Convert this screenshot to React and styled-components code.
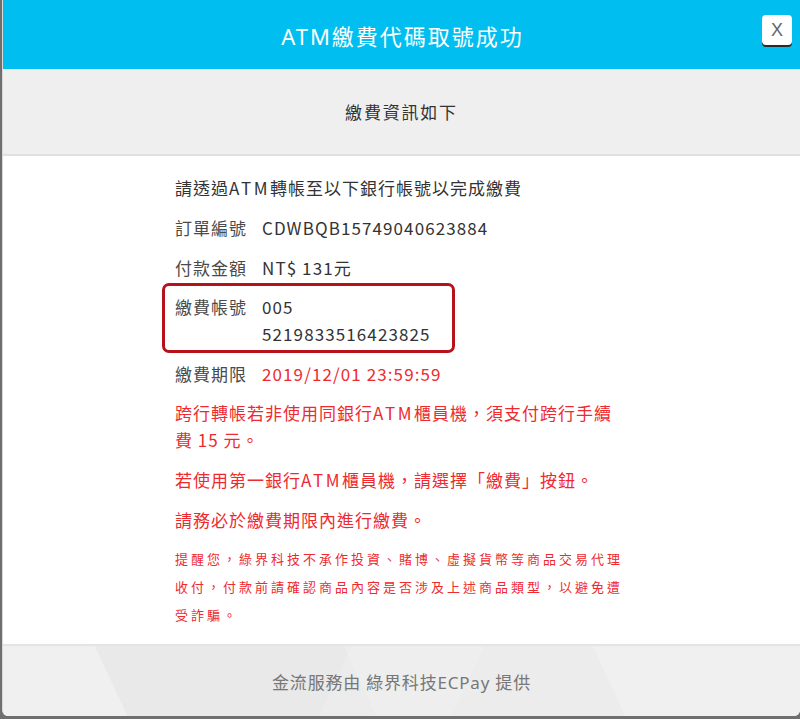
import React from "react";
import styled, { createGlobalStyle } from "styled-components";

const GlobalStyle = createGlobalStyle`
  html, body {
    margin: 0;
    padding: 0;
    background: #6f6f6f;
    overflow: hidden;
  }
  body {
    font-family: "Noto Sans", "Noto Sans CJK TC", sans-serif;
  }
`;

const Modal = styled.div`
  margin-left: 2px;
  width: 798px;
  height: 716px;
  background: #fff;
  border-left: 1px solid #d8d8d8;
  border-radius: 0 0 6px 6px;
  overflow: hidden;
  display: flex;
  flex-direction: column;
  box-sizing: border-box;
`;

const Header = styled.div`
  height: 69px;
  background: #00bff0;
  display: flex;
  align-items: center;
  justify-content: center;
  position: relative;
  flex-shrink: 0;
`;

const Title = styled.h1`
  margin: 0;
  color: #fff;
  font-family: "Noto Sans", "Noto Sans CJK TC", sans-serif;
  font-weight: 400;
  font-size: 22px;
  letter-spacing: 2px;
  padding-left: 2px;
`;

const CloseButton = styled.button`
  position: absolute;
  top: 15px;
  right: 8px;
  width: 30px;
  height: 30px;
  padding: 0;
  border: none;
  border-radius: 4px;
  background: #fff;
  box-shadow: 0 2px 0 #2a2a2a;
  color: #666;
  font-family: "Liberation Sans", "Noto Sans", sans-serif;
  font-size: 18px;
  line-height: 28px;
  cursor: pointer;
`;

const SubHeader = styled.div`
  height: 85px;
  background: #efefef;
  border-bottom: 2px solid #e0e0e0;
  display: flex;
  align-items: center;
  justify-content: center;
  font-size: 17px;
  letter-spacing: 1.8px;
  color: #333;
  flex-shrink: 0;
`;

const Body = styled.div`
  flex: 1;
  padding: 18px 0 0 172px;
  box-sizing: border-box;
`;

const Content = styled.div`
  width: 452px;
  font-family: "Noto Sans CJK TC", sans-serif;
  font-size: 17px;
  letter-spacing: 1px;
  line-height: 27px;
  color: #333;
`;

const Latin = styled.span`
  letter-spacing: 2.6px;
`;

const Para = styled.p`
  margin: ${(p) => p.$mt || 0}px 0 0 0;
  color: ${(p) => (p.$red ? "#ef2a2f" : "#333")};
`;

const Row = styled.div`
  display: grid;
  grid-template-columns: 72px 1fr;
  column-gap: 15px;
  margin-top: ${(p) => p.$mt || 0}px;
`;

const Label = styled.span`
  color: #4a4a4a;
`;

const Value = styled.span`
  color: ${(p) => (p.$red ? "#ef2a2f" : "#333")};
  letter-spacing: 1.1px;
`;

const HighlightBox = styled.div`
  margin: 1.5px 0 0 -13px;
  width: 293px;
  box-sizing: border-box;
  border: 3px solid #b5121b;
  border-radius: 7px;
  padding: 7.5px 0 2.5px 10px;
`;

const Notice = styled.p`
  margin: 11.5px 0 0 0;
  font-size: 13px;
  letter-spacing: 3px;
  line-height: 28px;
  color: #ef2a2f;
`;

const Footer = styled.div`
  height: 70px;
  flex-shrink: 0;
  border-top: 2px solid #e4e4e4;
  display: flex;
  align-items: center;
  justify-content: center;
  font-size: 17px;
  color: #777;
  letter-spacing: 0.8px;
  background:
    linear-gradient(115deg, rgba(255,255,255,0) 0 42%, rgba(255,255,255,0.12) 42% 58%, rgba(255,255,255,0) 58%),
    linear-gradient(65deg, #f0f0f0 0 15%, #e9e9e9 15% 45%, #ececec 45% 75%, #f0f0f0 75%);
`;

export default function App() {
  return (
    <>
      <GlobalStyle />
      <Modal>
        <Header>
          <Title>ATM繳費代碼取號成功</Title>
          <CloseButton>X</CloseButton>
        </Header>
        <SubHeader>繳費資訊如下</SubHeader>
        <Body>
          <Content>
            <Para>
              請透過<Latin>ATM</Latin>轉帳至以下銀行帳號以完成繳費
            </Para>
            <Row $mt={13}>
              <Label>訂單編號</Label>
              <Value>CDWBQB15749040623884</Value>
            </Row>
            <Row $mt={13}>
              <Label>付款金額</Label>
              <Value>NT$ 131元</Value>
            </Row>
            <HighlightBox>
              <Row>
                <Label>繳費帳號</Label>
                <Value>
                  005
                  <br />
                  5219833516423825
                </Value>
              </Row>
            </HighlightBox>
            <Row $mt={7.5}>
              <Label>繳費期限</Label>
              <Value $red>2019/12/01 23:59:59</Value>
            </Row>
            <Para $red $mt={12}>
              跨行轉帳若非使用同銀行<Latin>ATM</Latin>櫃員機，須支付跨行手續費 15 元。
            </Para>
            <Para $red $mt={13}>
              若使用第一銀行<Latin>ATM</Latin>櫃員機，請選擇「繳費」按鈕。
            </Para>
            <Para $red $mt={13}>
              請務必於繳費期限內進行繳費。
            </Para>
            <Notice>
              提醒您，綠界科技不承作投資、賭博、虛擬貨幣等商品交易代理收付，付款前請確認商品內容是否涉及上述商品類型，以避免遭受詐騙。
            </Notice>
          </Content>
        </Body>
        <Footer>金流服務由 綠界科技ECPay 提供</Footer>
      </Modal>
    </>
  );
}
